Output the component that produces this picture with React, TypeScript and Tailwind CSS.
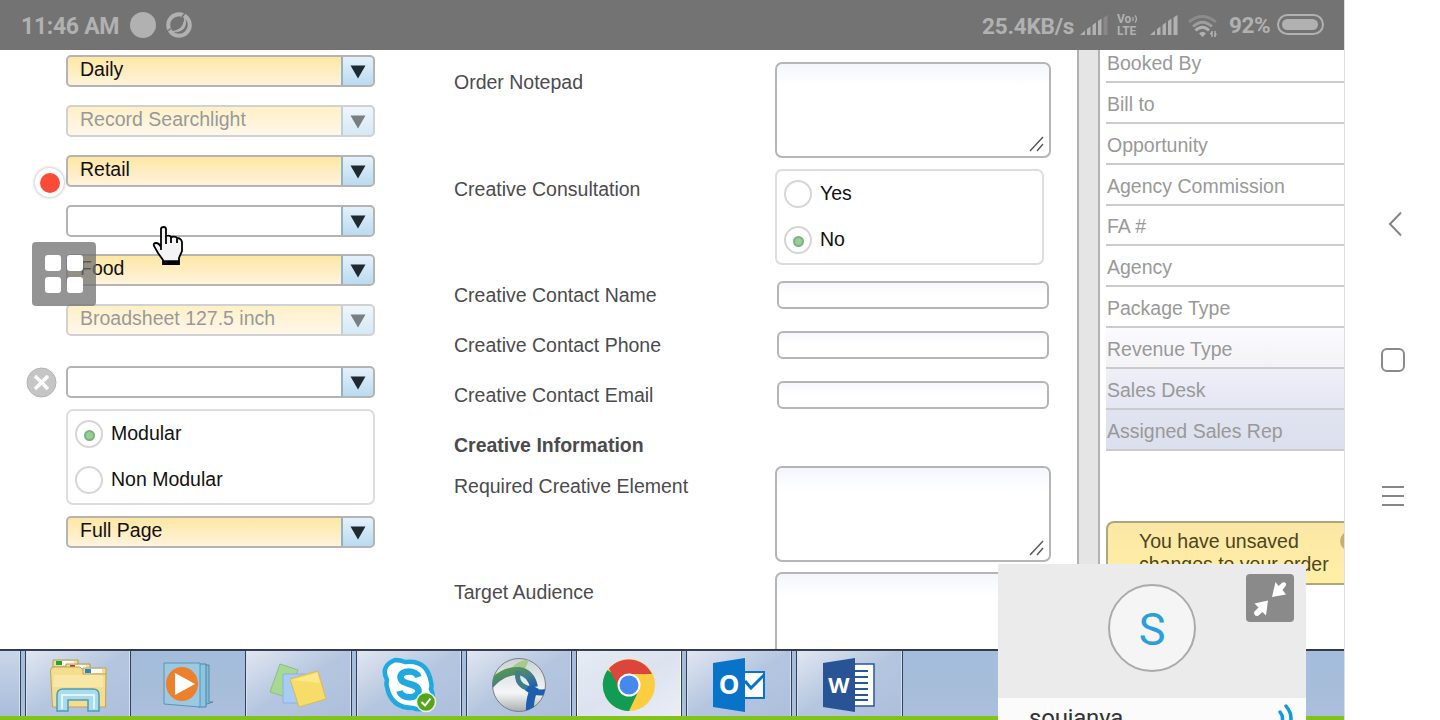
import React from "react";

function Select({ value = "", disabled = false, className = "" }: { value?: string; disabled?: boolean; className?: string }) {
  return (
    <div className={`h-8 shrink-0 ${className}`}>
      <div
        className={`flex h-8 w-[309px] overflow-hidden rounded-[5px] border-2 border-[#b5b3b3] ${
          value ? "bg-linear-to-b from-[#fee7a2] to-[#fff3dc]" : "bg-white"
        } ${disabled ? "opacity-60" : ""}`}
      >
        <div className={`flex-1 pl-3 leading-[25px] ${disabled ? "text-[#555]" : "text-[#111]"}`}>{value}</div>
        <div className="-my-0.5 -mr-0.5 flex w-[34px] items-center justify-center rounded-r-[5px] border-2 border-[#93b2c4] bg-linear-to-b from-[#e4f1fb] to-[#b9dbf0]">
          <svg width="16" height="14" viewBox="0 0 16 14" className="mt-0.5">
            <path d="M0.5 0.5H15.5L8 13.5Z" fill="#1f2a30" />
          </svg>
        </div>
      </div>
    </div>
  );
}

function Radio({ label, checked = false }: { label: string; checked?: boolean }) {
  return (
    <div className="flex h-[46px] items-center">
      <span className="flex size-7 items-center justify-center rounded-full border-2 border-[#d8d5d6] bg-white">
        {checked && <span className="mt-0.5 size-[11px] rounded-full border-2 border-[#7fae82] bg-[#94d193]" />}
      </span>
      <span className="ml-2 text-[#111]">{label}</span>
    </div>
  );
}

function TextArea({ className = "" }: { className?: string }) {
  return (
    <div className={`-ml-px flex w-[276px] items-end justify-end rounded-[7px] border-2 border-[#b5b4b6] bg-linear-to-b from-[#f4f6fd] to-white to-25% ${className}`}>
      <svg width="16" height="16" viewBox="0 0 16 16" className="mr-1 mb-1" stroke="#555" strokeWidth="1.4">
        <path d="M1 15L14 1M8 15L14 8" />
      </svg>
    </div>
  );
}

function Field({ label, row, pad = "pt-1.5", children }: { label: string; row: string; pad?: string; children?: React.ReactNode }) {
  return (
    <div className={`grid shrink-0 grid-cols-[322px_1fr] text-[#4b4b4d] ${row}`}>
      <div className={`leading-7 ${pad}`}>{label}</div>
      <div>{children}</div>
    </div>
  );
}

const TextInput = () => <div className="ml-px h-7 w-[272px] rounded-[6px] border-2 border-[#b5b4b6] bg-linear-to-b from-[#f8f7fc] to-white to-50%" />;

function Signal({ dim = false }: { dim?: boolean }) {
  return (
    <svg width="28" height="20" viewBox="0 0 28 20" fill="#b1b1b1">
      <path d="M0 20L5 15.5V20ZM7 14L10.500 11.500V20H7ZM12.500 10L16 7.500V20H12.500ZM18 6L21.500 3.500V20H18Z" />
      <path d="M23.500 2.500L27.500 0V20H23.500Z" opacity={dim ? 0.35 : 1} />
    </svg>
  );
}

function StatusBar() {
  return (
    <header className="flex h-[50px] shrink-0 items-center bg-[#737373] font-['Roboto'] text-[23px] leading-none font-bold text-[#b1b1b1]">
      <span className="ml-[21px] w-[109px] pt-0.5 text-[23px] tracking-[-0.3px] whitespace-nowrap">11:46 AM</span>
      <span className="size-[26px] rounded-full bg-[#b1b1b1]" />
      <svg width="26" height="26" viewBox="0 0 26 26" className="ml-2.5" fill="none">
        <circle cx="13" cy="13" r="10.800" stroke="#b1b1b1" strokeWidth="4" />
        <path d="M20 8Q21 19 9 20.500Q16 17 18 9Z" fill="#b1b1b1" />
        <path d="M18.500 4Q21 17 6 20" stroke="#b1b1b1" strokeWidth="1.500" />
        <path d="M16 5L19.500 0.500M5 16.500L0.500 19.500" stroke="#737373" strokeWidth="1.500" />
      </svg>
      <span className="ml-[790px] w-[98px] pt-0.5 text-[22.500px] tracking-[-0.2px] whitespace-nowrap">25.4KB/s</span>
      <Signal dim />
      <span className="ml-[9px] flex w-[24px] flex-col text-[12px] leading-3">
        <span className="flex items-center whitespace-nowrap">
          Vo
          <svg width="6" height="8" viewBox="0 0 6 8" className="ml-px" fill="none" stroke="#b1b1b1" strokeWidth="1.200">
            <path d="M0.500 2Q2 4 0.500 6M3 0.500Q6 4 3 7.500" />
          </svg>
        </span>
        <span>LTE</span>
      </span>
      <span className="ml-[9px] flex"><Signal /></span>
      <svg width="29" height="23" viewBox="0 0 29 23" className="mt-0.5 ml-2.5" fill="none" stroke="#b1b1b1" strokeWidth="2.800">
        <path d="M1 7Q14 -4 28 7" opacity="0.4" />
        <path d="M5 11.500Q14.500 3 24 11.500" opacity="0.7" />
        <path d="M7.500 15.500Q14.500 9 21 15.500" />
        <path d="M11 18.500Q14.500 15 18 18.500L14.500 22Z" fill="#b1b1b1" stroke="none" />
        <path d="M24 16V22M27 16V22" strokeWidth="1.400" />
        <path d="M21.500 19L24 16V20ZM29 19L27 22V18Z" fill="#b1b1b1" stroke="none" />
      </svg>
      <span className="ml-3 w-[48px] text-[22.500px] tracking-[-0.4px] whitespace-nowrap">92%</span>
      <span className="-mt-0.5 flex h-[21px] w-[47px] rounded-full border-2 border-[#b1b1b1] p-[3px]">
        <span className="w-[36px] rounded-full bg-[#b1b1b1]" />
      </span>
    </header>
  );
}

const details = [
  ["Booked By", "h-[33px] pb-1"],
  ["Bill to", "h-[41px] pt-1"],
  ["Opportunity", "h-[41px] pt-1"],
  ["Agency Commission", "h-[41px] pt-1"],
  ["FA #", "h-[40px] pt-1"],
  ["Agency", "h-[41px] pt-1"],
  ["Package Type", "h-[41px] pt-1"],
  ["Revenue Type", "h-[41px] pt-1 bg-linear-to-b from-[#fbfbff] to-[#f3f3f6]"],
  ["Sales Desk", "h-[41px] pt-1 bg-linear-to-b from-[#efeff8] to-[#e4e6f3]"],
  ["Assigned Sales Rep", "h-[41px] pt-1 bg-linear-to-b from-[#e0e4f0] to-[#dcdfed]"],
];

function FolderIcon() {
  return (
    <svg width="60" height="56" viewBox="0 0 60 56">
      <path d="M5 3H30V10H5Z" fill="#f3dc93" stroke="#b39a57" />
      <path d="M8 4H14V8H8Z" fill="#1ca73a" /><path d="M14 4H26V8H14Z" fill="#fff" />
      <path d="M18 7H42V14H18Z" fill="#f3dc93" stroke="#b39a57" /><path d="M22 8H27V11H22Z" fill="#c9362c" /><path d="M27 8H38V11H27Z" fill="#fff" />
      <path d="M2.500 14Q2.500 10 6 10H32L36 14H54Q58 14 58 17L57.500 50H4.500Z" fill="#f5dd8f" stroke="#bda35c" />
      <path d="M35 11H58V17H35Z" fill="#f5dd8f" stroke="#bda35c" /><path d="M37 12H43V16H37Z" fill="#1b8ad2" /><path d="M43 12H54V16H43Z" fill="#fff" />
      <path d="M6 18H55L55 30H5Z" fill="#fbeeb6" opacity=".6" />
      <path d="M9 54V38Q9 32 15 32H45Q51 32 51 38V54H40V43H20V54Z" fill="#a9dbea" stroke="#4c9dba" strokeWidth="1.500" />
      <path d="M14 52V38H46V52" fill="none" stroke="#dff5fa" strokeWidth="2" />
    </svg>
  );
}
function MediaIcon() {
  return (
    <svg width="52" height="48" viewBox="0 0 52 48">
      <path d="M34 4H47V41H51L45 43H34Z" fill="#86bad4" stroke="#4f8ba9" />
      <path d="M36 3H44V46H36Z" fill="#8dc5df" stroke="#4887a8" />
      <path d="M2 2H38V46L2 43Z" fill="#9bc9e2" stroke="#5a94b3" />
      <ellipse cx="20" cy="23" rx="16" ry="17" fill="#ee7f2b" />
      <path d="M13 12L33 23L13 34Z" fill="#fff" />
    </svg>
  );
}
function NotesIcon() {
  return (
    <svg width="60" height="48" viewBox="0 0 60 48">
      <path d="M12 3L30 9L18 36L2 31Z" fill="#a7d994" stroke="#8cbd86" />
      <path d="M15 13H37V42H15Z" fill="#a8ccf3" stroke="#8eb2db" />
      <path d="M22 18L50 10L58 38L31 46Z" fill="#f8dc68" stroke="#d5bb5d" />
      <path d="M24 19L49 12L52 22Z" fill="#fff0a0" opacity=".6" />
    </svg>
  );
}
function SkypeIcon() {
  return (
    <svg width="56" height="58" viewBox="0 0 56 58">
      <path d="M14 4Q20 4 24 6Q46 3 50 26Q51 30 50 33Q54 42 49 48Q42 56 32 52Q10 52 6 31Q5 28 6 24Q-1 10 14 4Z" fill="#fff" stroke="#20a9df" strokeWidth="4.500" />
      <path d="M37.500 21C35 13.500 20 13.500 19.500 21C19.500 30 37.500 26 37.500 35C37 43.500 20.500 43 18.500 35" fill="none" stroke="#20a9df" strokeWidth="6.500" />
      <circle cx="45" cy="46" r="9.500" fill="#55a51c" stroke="#e9f5df" strokeWidth="1.500" />
      <path d="M40.500 46L44 49.500L49.500 42.500" fill="none" stroke="#fff" strokeWidth="2" />
    </svg>
  );
}
function VpnIcon() {
  return (
    <svg width="56" height="56" viewBox="0 0 56 56">
      <defs>
        <linearGradient id="globe" x1="0" y1="0" x2="0" y2="1"><stop stopColor="#cbd3d5" /><stop offset=".65" stopColor="#f5f6f7" /><stop offset="1" stopColor="#a9adb2" /></linearGradient>
        <linearGradient id="swoosh" x1="0" y1="0" x2="1" y2="1"><stop stopColor="#5c9f3c" /><stop offset=".6" stopColor="#417c8b" /><stop offset="1" stopColor="#1c5fac" /></linearGradient>
        <clipPath id="ball"><circle cx="28" cy="28" r="26.500" /></clipPath>
      </defs>
      <circle cx="28" cy="28" r="26.500" fill="url(#globe)" stroke="#777f83" />
      <g clipPath="url(#ball)" fill="none">
        <path d="M20 12Q26 3 38 3L34 12Z" fill="#a6c98c" />
        <path d="M-2 29Q12 13 28 14Q40 16 43 30" stroke="url(#swoosh)" strokeWidth="8" />
        <path d="M27 14Q24 29 40 32" stroke="#417c8b" strokeWidth="5" />
        <path d="M36 31Q44 37 56 35" stroke="#1c5fac" strokeWidth="6" />
        <path d="M44 30Q38 42 39 56" stroke="#1c5fac" strokeWidth="8" />
      </g>
    </svg>
  );
}
function ChromeIcon() {
  return (
    <svg width="54" height="54" viewBox="0 0 54 54">
      <circle cx="27" cy="27" r="26" fill="#fccd3f" />
      <path d="M27 27L5.500 12A26 26 0 0 0 27 53L36 34Z" fill="#129b52" />
      <path d="M7 10.500A26 26 0 0 1 50 16H27L16 28Z" fill="#dc453a" />
      <circle cx="27" cy="27" r="11.500" fill="#fff" />
      <circle cx="27" cy="27" r="9.500" fill="#4788ed" />
    </svg>
  );
}
function OutlookIcon() {
  return (
    <svg width="54" height="54" viewBox="0 0 54 54">
      <path d="M28 14H52V40H28Z" fill="#fff" stroke="#0874c7" strokeWidth="2" />
      <path d="M33 23L39 30L52 17" fill="none" stroke="#0874c7" strokeWidth="3" />
      <path d="M1 5L33 0V54L1 49Z" fill="#0873c8" />
      <text x="17" y="36" textAnchor="middle" fontFamily="Open Sans, sans-serif" fontWeight="700" fontSize="26" fill="#fff">O</text>
    </svg>
  );
}
function WordIcon() {
  return (
    <svg width="54" height="54" viewBox="0 0 54 54">
      <path d="M28 6H52V48H28Z" fill="#fff" stroke="#285796" strokeWidth="1.500" />
      <path d="M32 13H46M32 19H46M32 25H46M32 31H46M32 37H46M32 42H46" stroke="#285796" strokeWidth="2" />
      <path d="M1 5L33 0V54L1 49Z" fill="#285496" />
      <text x="17" y="35" textAnchor="middle" fontFamily="Open Sans, sans-serif" fontWeight="700" fontSize="22" fill="#fff">W</text>
    </svg>
  );
}

const glass = "border-x border-[#d6e0ee] bg-linear-to-br from-[#e1e6f1] via-[#b4c6df] to-[#aebfdd] outline outline-[#31425a]";
const tasks = [
  { name: "Explorer", icon: <FolderIcon />, style: glass },
  { name: "Media Player", icon: <MediaIcon />, style: "" },
  { name: "Sticky Notes", icon: <NotesIcon />, style: glass },
  { name: "Skype", icon: <SkypeIcon />, style: glass },
  { name: "VPN", icon: <VpnIcon />, style: glass },
  { name: "Chrome", icon: <ChromeIcon />, style: "border-x border-white bg-linear-to-br from-[#e6ebf3] via-[#dce3ef] to-[#eaedf5] outline outline-[#31425a]" },
  { name: "Outlook", icon: <OutlookIcon />, style: glass },
  { name: "Word", icon: <WordIcon />, style: glass },
];

function Taskbar() {
  return (
    <footer className="flex h-[71px] shrink-0 flex-col border-t-2 border-[#343a48] bg-[#a5bedb]">
      <div className="flex h-[65px] gap-[6px] bg-linear-to-b from-[#a4bddd] via-[#a5bdd8] to-[#abc0df]">
        <div className="w-5 border-r border-[#d6e0ee] bg-linear-to-b from-[#c9d5e8] to-[#a9bddb] outline outline-[#31425a]" />
        {tasks.map((t) => (
          <div key={t.name} className={`flex h-full w-[104.200px] items-center justify-center pt-[3px] ${t.style}`}>
            {t.icon}
          </div>
        ))}
      </div>
      <div className="h-1 bg-[#82c31b]" />
    </footer>
  );
}

function CallCard() {
  return (
    <div className="absolute top-[564px] left-[998px] flex h-[156px] w-[308px] flex-col overflow-hidden bg-[#fbfbfb] font-['Roboto']">
      <div className="relative flex h-[134px] shrink-0 items-center justify-center bg-[#ebebeb]">
        <div className="mt-[-6px] flex size-[88px] items-center justify-center rounded-full border-2 border-[#aaa] bg-[#f5f5f5] pt-0.5 text-[45px] leading-none text-[#2a9fd9]">S</div>
        <div className="absolute top-2.5 right-3 flex size-12 items-center justify-center rounded-[4px] bg-[#8a8a8a]">
          <svg width="48" height="48" viewBox="0 0 48 48" fill="#fff">
            <path d="M26 23L29.500 8L32.500 12L36.500 8.500Q38.500 7.500 40 9.500Q40.500 11 39.500 12L36.500 16L40 20.500Z" />
            <path d="M22 26.500L20 41.500L16.500 38L12 42Q9.500 42.500 8.500 40.500Q7.500 39 8.500 37.500L12.500 33.500L8.500 29.500Z" />
          </svg>
        </div>
      </div>
      <div className="flex justify-between pr-3 pl-[31px]">
        <span className="mt-[6px] text-[24px] leading-7 tracking-[-0.2px] text-[#333]">soujanya</span>
        <svg width="16" height="30" viewBox="0 0 16 30" className="mt-[5px]" fill="none" stroke="#1299d6" strokeWidth="3.500" strokeLinecap="round">
          <path d="M2 9Q7 15 2 23M8 3Q18 15 8 28" />
        </svg>
      </div>
    </div>
  );
}

export default function App() {
  return (
    <div className="relative flex h-[720px] w-[1440px] overflow-hidden bg-white font-['Liberation_Sans',sans-serif] text-[19.500px]">
      <main className="flex w-[1344px] flex-col">
        <StatusBar />
        <div className="flex h-[599px] overflow-hidden">
          <section className="flex w-[454px] shrink-0 flex-col pt-[5px] pl-[66px]">
            <Select value="Daily" className="mb-[18px]" />
            <Select value="Record Searchlight" disabled className="mb-[18px]" />
            <Select value="Retail" className="mb-[18px]" />
            <Select className="mb-[17px]" />
            <Select value="Food" className="mb-[18px]" />
            <Select value="Broadsheet 127.5 inch" disabled className="mb-[30px]" />
            <div className="mb-[11px] -ml-10 flex h-8 shrink-0 items-center">
              <svg width="31" height="31" viewBox="0 0 31 31" className="mr-[9px]">
                <circle cx="15.500" cy="15.500" r="14.500" fill="#c7c6c7" stroke="#b5b4b5" />
                <path d="M9 9L22 22M22 9L9 22" stroke="#fff" strokeWidth="3.500" />
              </svg>
              <Select />
            </div>
            <div className="mb-[11px] h-24 w-[309px] shrink-0 rounded-[7px] border-2 border-[#dedddd] pl-[7px]">
              <Radio label="Modular" checked />
              <Radio label="Non Modular" />
            </div>
            <Select value="Full Page" />
          </section>
          <section className="flex w-[623px] shrink-0 flex-col">
            <Field label="Order Notepad" row="h-[119px]" pad="pt-[18px]">
              <TextArea className="mt-3 h-24" />
            </Field>
            <Field label="Creative Consultation" row="h-[112px]">
              <div className="-ml-px h-24 w-[269px] rounded-[7px] border-2 border-[#dedddd] pl-[7px]">
                <Radio label="Yes" />
                <Radio label="No" checked />
              </div>
            </Field>
            <Field label="Creative Contact Name" row="h-[50px]" pad="pt-0"><TextInput /></Field>
            <Field label="Creative Contact Phone" row="h-[50px]" pad="pt-0"><TextInput /></Field>
            <Field label="Creative Contact Email" row="h-[50px]" pad="pt-0"><TextInput /></Field>
            <Field label="Creative Information" row="h-[35px] font-bold" pad="pt-0" />
            <Field label="Required Creative Element" row="h-[106px]"><TextArea className="h-24" /></Field>
            <Field label="Target Audience" row="h-[106px]"><TextArea className="h-24" /></Field>
          </section>
          <div className="w-[23px] shrink-0 border-r-2 border-l-2 border-[#b2b1b2] bg-[#e6e5e5]" />
          <aside className="flex min-w-0 flex-1 flex-col pl-1.5">
            {details.map(([label, style]) => (
              <div key={label} className={`flex shrink-0 items-center border-b-2 border-[#cbcbcd] pl-px text-[#999] ${style}`}>
                {label}
              </div>
            ))}
            <div className="relative mt-[70px] h-[64px] shrink-0 overflow-hidden rounded-l-[8px] border-2 border-r-0 border-[#b0a67c] bg-linear-to-b from-[#fbe7a6] to-[#ffefa5] pt-[7px] pl-[31px] leading-[23px] text-[#4b4520]">
              You have unsaved
              <br />
              changes to your order
              <span className="absolute top-2 -right-4 size-5 rounded-full bg-[#c2b36a]" />
            </div>
          </aside>
        </div>
        <Taskbar />
      </main>
      <nav className="flex w-24 flex-col items-center border-l border-[#dedede] bg-white">
        <svg width="26" height="26" viewBox="0 0 26 26" className="mt-[211px]" fill="none" stroke="#858585" strokeWidth="2">
          <path d="M21 1.500L10 13L21 24.500" />
        </svg>
        <span className="mt-[111px] size-6 rounded-[6px] border-2 border-[#8a8a8a]" />
        <svg width="24" height="24" viewBox="0 0 24 24" className="mt-[112px]" stroke="#858585" strokeWidth="2">
          <path d="M1 3H23M1 12H23M1 21H23" />
        </svg>
      </nav>

      <div className="absolute top-[168px] left-[35px] flex size-[29px] items-center justify-center rounded-full bg-white shadow-[0_0_3px_1px_rgba(0,0,0,0.2)]">
        <span className="size-5 rounded-full bg-[#f84b38]" />
      </div>
      <div className="absolute top-[242px] left-8 grid size-16 grid-cols-2 content-center justify-center gap-1.5 rounded-[4px] bg-[#707070]/75 px-[13px]">
        <span className="size-4 rounded-[3px] bg-white" />
        <span className="size-4 rounded-[3px] bg-white" />
        <span className="size-4 rounded-[3px] bg-white" />
        <span className="size-4 rounded-[3px] bg-white" />
      </div>
      <svg width="32" height="40" viewBox="0 0 32 40" className="absolute top-[226px] left-[152px]">
        <path d="M9 24V3Q9 1 11.500 1Q14 1 14 3V10Q18 9 19 11Q24 10 25 12Q29 12 30 16V25L27 32V38H11V34L6 27L2 20Q1 17 4 17Q7 17 9 21Z" fill="#f4f4f6" stroke="#000" strokeWidth="1.800" />
        <path d="M14 10V18M19 11V17M25 13V17" stroke="#000" strokeWidth="1.800" />
        <path d="M11 36H27" stroke="#000" strokeWidth="3.500" />
      </svg>
      <CallCard />
    </div>
  );
}
